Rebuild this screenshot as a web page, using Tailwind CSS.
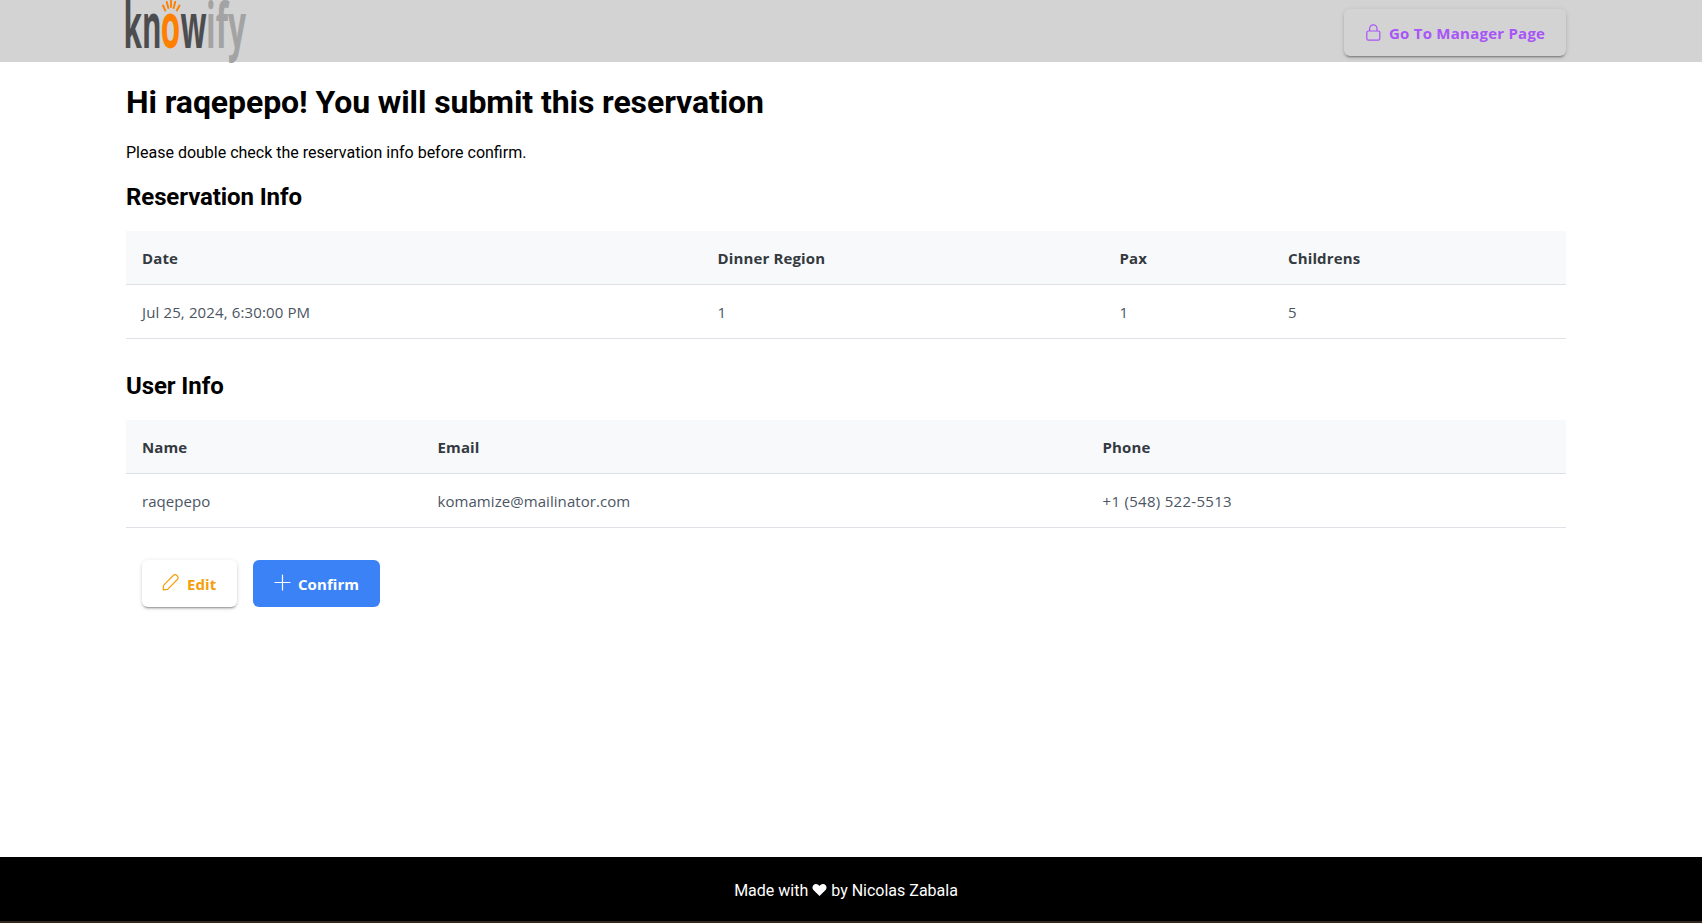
<!DOCTYPE html>
<html lang="en">
<head>
<meta charset="utf-8">
<title>Knowify</title>
<script src="https://cdn.jsdelivr.net/npm/@tailwindcss/browser@4"></script>
</head>
<body class="h-[923px] flex flex-col bg-white text-black font-['Roboto',sans-serif] overflow-hidden">
<header class="h-[62px] shrink-0 bg-[#d3d3d3] pl-[126px] pr-[136px] flex justify-between">
  <svg class="w-[122px] h-[62px] overflow-visible" viewBox="0 0 122 62" font-family="Open Sans, sans-serif" font-size="63">
    <g fill="#4d4d4f" font-weight="700">
      <text x="-2.500" y="47.500" textLength="38" lengthAdjust="spacingAndGlyphs">kn</text>
      <text x="54.500" y="47.500" textLength="26" lengthAdjust="spacingAndGlyphs">w</text>
    </g>
    <text x="34.700" y="47.500" fill="#ff7f00" font-weight="700" textLength="19.500" lengthAdjust="spacingAndGlyphs">o</text>
    <text x="80" y="47.500" fill="#a3a3a3" font-weight="700" textLength="40" lengthAdjust="spacingAndGlyphs">ify</text>
    <g stroke="#ff7f00" stroke-width="1.900" stroke-linecap="round">
      <path d="M37 5.500L39.300 10.500M40.800 2L42.300 8M45 .5V7M49.200 2L47.700 8M53.500 5.500L50.800 10.500"/>
    </g>
  </svg>
  <button class="mt-[9px] w-[222px] h-[47px] rounded-md pl-[22px] flex items-center gap-2 text-[#a855f7] shadow-[0_3px_1px_-2px_rgba(0,0,0,0.2),0_2px_2px_0_rgba(0,0,0,0.14),0_1px_5px_0_rgba(0,0,0,0.12)]">
    <svg class="w-[15px] h-[17px] mb-px" viewBox="0 0 15 17" fill="none" stroke="currentColor" stroke-width="1.200"><rect x=".8" y="7" width="13" height="9.200" rx="1.600"/><path d="M3.600 7V4.700a3.700 3.900 0 0 1 7.400 0V7"/></svg>
    <span class="mt-[2px] font-['Open_Sans',sans-serif] font-bold text-[15px] leading-[21px] tracking-[0.24px] whitespace-nowrap">Go To Manager Page</span>
  </button>
</header>
<main class="pl-[126px] pr-[136px] flex-1">
  <h1 class="mt-[21px] text-[32px] leading-[38px] font-bold tracking-[-0.09px]">Hi raqepepo! You will submit this reservation</h1>
  <p class="mt-[22px] text-base leading-[19px]">Please double check the reservation info before confirm.</p>
  <h2 class="mt-[21px] text-2xl leading-[28px] font-bold tracking-[-0.1px]">Reservation Info</h2>
  <table class="mt-5 w-[1440px] table-fixed border-separate border-spacing-0 text-left text-[15px] leading-[21px] font-['Open_Sans',sans-serif]">
    <colgroup><col class="w-[575.5px]"><col class="w-[402px]"><col class="w-[168.5px]"><col class="w-[294px]"></colgroup>
    <thead class="bg-[#f8f9fb] text-[#343a40] tracking-[0.13px]">
      <tr>
        <th class="px-4 pt-[17px] pb-[15px] border-b border-[#dee2e6] font-bold">Date</th>
        <th class="px-4 pt-[17px] pb-[15px] border-b border-[#dee2e6] font-bold">Dinner Region</th>
        <th class="px-4 pt-[17px] pb-[15px] border-b border-[#dee2e6] font-bold">Pax</th>
        <th class="px-4 pt-[17px] pb-[15px] border-b border-[#dee2e6] font-bold">Childrens</th>
      </tr>
    </thead>
    <tbody class="text-[#4b5563] tracking-[0.13px]">
      <tr>
        <td class="px-4 pt-[17px] pb-[15px] border-b border-[#dee2e6]">Jul 25, 2024, 6:30:00 PM</td>
        <td class="px-4 pt-[17px] pb-[15px] border-b border-[#dee2e6]">1</td>
        <td class="px-4 pt-[17px] pb-[15px] border-b border-[#dee2e6]">1</td>
        <td class="px-4 pt-[17px] pb-[15px] border-b border-[#dee2e6]">5</td>
      </tr>
    </tbody>
  </table>
  <h2 class="mt-[33px] text-2xl leading-[28px] font-bold tracking-[-0.1px]">User Info</h2>
  <table class="mt-5 w-[1440px] table-fixed border-separate border-spacing-0 text-left text-[15px] leading-[21px] font-['Open_Sans',sans-serif]">
    <colgroup><col class="w-[295.5px]"><col class="w-[665px]"><col class="w-[479.5px]"></colgroup>
    <thead class="bg-[#f8f9fb] text-[#343a40] tracking-[0.13px]">
      <tr>
        <th class="px-4 pt-[17px] pb-[15px] border-b border-[#dee2e6] font-bold">Name</th>
        <th class="px-4 pt-[17px] pb-[15px] border-b border-[#dee2e6] font-bold">Email</th>
        <th class="px-4 pt-[17px] pb-[15px] border-b border-[#dee2e6] font-bold">Phone</th>
      </tr>
    </thead>
    <tbody class="text-[#4b5563] tracking-[0.06px]">
      <tr>
        <td class="px-4 pt-[17px] pb-[15px] border-b border-[#dee2e6]">raqepepo</td>
        <td class="px-4 pt-[17px] pb-[15px] border-b border-[#dee2e6]">komamize@mailinator.com</td>
        <td class="px-4 pt-[17px] pb-[15px] border-b border-[#dee2e6] tracking-[0.3px]">+1 (548) 522-5513</td>
      </tr>
    </tbody>
  </table>
  <div class="mt-[31.5px] ml-4 flex gap-4 font-['Open_Sans',sans-serif] font-bold text-[15px] leading-[21px] tracking-[0.06px]">
    <button class="w-[95px] h-[47px] rounded-md bg-white pl-[20px] flex items-center gap-2 text-[#f59e0b] shadow-[0_3px_1px_-2px_rgba(0,0,0,0.2),0_2px_2px_0_rgba(0,0,0,0.14),0_1px_5px_0_rgba(0,0,0,0.12)]">
      <svg class="w-[17px] h-[17px] mb-px" viewBox="0 0 17 17" fill="none" stroke="currentColor" stroke-width="1.200" stroke-linejoin="round"><path d="M1.200 15.800L1.500 11.300L11.300 1.500C12.300 .5 13.800 .5 14.800 1.500L15.400 2.100C16.400 3.100 16.400 4.500 15.400 5.500L5.600 15.300Z"/></svg>
      <span class="mt-[2px]">Edit</span>
    </button>
    <button class="w-[127px] h-[47px] rounded-md bg-[#3b82f6] pl-[21px] flex items-center gap-[7px] text-white">
      <svg class="w-[17px] h-[17px] mb-px" viewBox="0 0 17 17" fill="none" stroke="currentColor" stroke-width="1.200" stroke-linecap="round"><path d="M8.500 1V16M1 8.500H16"/></svg>
      <span class="mt-[2px]">Confirm</span>
    </button>
  </div>
</main>
<footer class="h-[66px] shrink-0 bg-black border-b-2 border-[#33261f] pr-[10px] flex items-center justify-center gap-1 text-white text-base leading-[19px]">
  <span class="mt-[3px]">Made with</span>
  <svg class="w-[15px] h-[14px] mt-px" viewBox="0 0 15 14" fill="currentColor"><path d="M7.500 13L1.400 6.900C.2 5.600 .1 3.600 1.300 2.200C2.700 .6 5 .6 6.600 2L7.500 2.900L8.400 2C10 .6 12.300 .6 13.700 2.200C14.900 3.600 14.800 5.600 13.600 6.900Z"/></svg>
  <span class="mt-[3px]">by Nicolas Zabala</span>
</footer>
</body>
</html>
